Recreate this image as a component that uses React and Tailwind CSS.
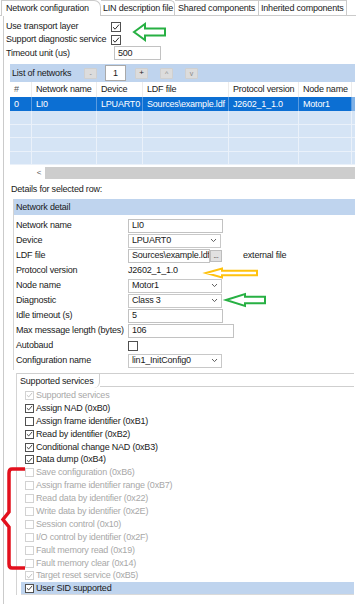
import React from 'react'

const NETWORKS = [{ id: '0', name: 'LI0', device: 'LPUART0', ldf: 'Sources\\example.ldf', proto: 'J2602_1_1.0', node: 'Motor1' }]

const COLS = [
  { key: 'id', label: '#', w: 'w-[22px]' },
  { key: 'name', label: 'Network name', w: 'w-[65px]' },
  { key: 'device', label: 'Device', w: 'w-[46px]' },
  { key: 'ldf', label: 'LDF file', w: 'w-[86px]' },
  { key: 'proto', label: 'Protocol version', w: 'w-[70px]' },
  { key: 'node', label: 'Node name', w: 'w-[53px]' },
]

const SERVICES = [
  { label: 'Supported services', on: true, dis: true },
  { label: 'Assign NAD (0xB0)', on: true },
  { label: 'Assign frame identifier (0xB1)', on: false },
  { label: 'Read by identifier (0xB2)', on: true },
  { label: 'Conditional change NAD (0xB3)', on: true },
  { label: 'Data dump (0xB4)', on: true },
  { label: 'Save configuration (0xB6)', dis: true },
  { label: 'Assign frame identifier range (0xB7)', dis: true },
  { label: 'Read data by identifier (0x22)', dis: true },
  { label: 'Write data by identifier (0x2E)', dis: true },
  { label: 'Session control (0x10)', dis: true },
  { label: 'I/O control by identifier (0x2F)', dis: true },
  { label: 'Fault memory read (0x19)', dis: true },
  { label: 'Fault memory clear (0x14)', dis: true },
  { label: 'Target reset service (0xB5)', on: true, dis: true },
]

function Check({ on, dis, size = 'w-[10px] h-[10px]' }) {
  return (
    <span className={`${size} shrink-0 inline-flex items-center justify-center bg-white border ${dis ? 'border-[#d2d2d2]' : 'border-[#505050]'}`}>
      {on && (
        <svg width="8" height="8" viewBox="0 0 8 8">
          <path d="M1 4.2 L3.1 6.2 L7 1.6" fill="none" stroke={dis ? '#b8b8b8' : '#2a2a2a'} strokeWidth="1" />
        </svg>
      )}
    </span>
  )
}

function Chevron() {
  return (
    <svg width="7" height="5" viewBox="0 0 7 5">
      <path d="M1 1 L3.5 3.6 L6 1" fill="none" stroke="#606060" strokeWidth="1" />
    </svg>
  )
}

function Input({ w, value }) {
  return (
    <div className={`${w} h-[14px] shrink-0 border border-[#c2c2c2] bg-white flex items-center pl-[3px] overflow-hidden`}>
      {value}
    </div>
  )
}

function Select({ w, value }) {
  return (
    <div className={`${w} h-[14px] shrink-0 border border-[#c8c8c8] bg-white flex items-center justify-between pl-[3px] pr-[3px]`}>
      <span>{value}</span>
      <Chevron />
    </div>
  )
}

function SmallBtn({ children }) {
  return (
    <div className="w-[13px] h-[11px] shrink-0 bg-[#dcdcdc] border border-[#d0d0d0] rounded-[1px] flex items-center justify-center text-[7px] text-[#8a8a8a]">
      {children}
    </div>
  )
}

function Arrow({ tip, cy, hw, hh, bh, end, color }) {
  const pts = [
    [tip, cy], [tip + hw, cy - hh], [tip + hw, cy - bh], [end, cy - bh],
    [end, cy + bh], [tip + hw, cy + bh], [tip + hw, cy + hh],
  ].map(p => p.join(',')).join(' ')
  return <polygon points={pts} fill="white" stroke={color} strokeWidth="2" strokeLinejoin="miter" />
}

function Row({ label, children }) {
  return (
    <div className="h-[15px] flex items-center">
      <div className="w-[114px] shrink-0 pl-[2px]">{label}</div>
      {children}
    </div>
  )
}

export default function App() {
  return (
    <div className="relative w-[356px] h-[604px] overflow-hidden bg-white text-[#1a1a1a] text-[9px] tracking-[-0.2px] leading-none whitespace-nowrap font-['Liberation_Sans',Arial,sans-serif]">
      {/* Tabs */}
      <div className="flex items-end h-[16px] border-b border-[#cbcbcb]">
        <div className="w-[100px] shrink-0 h-[16px] -mb-px bg-white border-t border-l border-r border-[#cbcbcb] rounded-tr-[7px] pl-[4px] ml-[1px] flex items-center">
          Network configuration
        </div>
        <div className="w-[74px] shrink-0 h-[15px] border-t border-r border-[#cbcbcb] rounded-tr-[5px] pl-[2px] flex items-center">
          LIN description file
        </div>
        <div className="w-[84px] shrink-0 h-[15px] border-t border-r border-[#cbcbcb] pl-[3px] flex items-center">
          Shared components
        </div>
        <div className="w-[88px] shrink-0 h-[15px] border-t border-r border-[#cbcbcb] pl-[2px] flex items-center">
          Inherited components
        </div>
      </div>

      {/* Page body */}
      <div className="ml-[3px] border-l border-[#cbcbcb] pl-[2px] h-[588px]">
        <div className="pt-[4px]">
          <div className="h-[13px] flex items-center">
            <div className="w-[105px] shrink-0">Use transport layer</div>
            <Check on />
          </div>
          <div className="h-[13px] flex items-center">
            <div className="w-[105px] shrink-0">Support diagnostic service</div>
            <Check on />
          </div>
          <div className="h-[14px] flex items-center">
            <div className="w-[108px] shrink-0">Timeout unit (us)</div>
            <Input w="w-[47px]" value="500" />
          </div>
        </div>

        {/* List of networks */}
        <div className="ml-[4px] mr-[1px] mt-[4px]">
          <div className="h-[18px] bg-[#bfd4ee] flex items-center pl-[2px]">
            <div className="w-[72px] shrink-0">List of networks</div>
            <SmallBtn>-</SmallBtn>
            <div className="ml-[8px] w-[21px] h-[16px] bg-white border border-[#a9a9a9] flex items-center justify-center">1</div>
            <div className="ml-[9px]"><SmallBtn><span className="text-[#222] text-[8px]">+</span></SmallBtn></div>
            <div className="ml-[12px]"><SmallBtn>^</SmallBtn></div>
            <div className="ml-[12px]"><SmallBtn>v</SmallBtn></div>
          </div>

          <div className="flex h-[15px] bg-white">
            {COLS.map(c => (
              <div key={c.key} className={`${c.w} shrink-0 border-r border-[#ececec] pl-[4px] flex items-center overflow-hidden ${c.key === 'id' ? 'text-[#555]' : ''}`}>
                {c.label}
              </div>
            ))}
            <div className="flex-1" />
          </div>

          {NETWORKS.map(n => (
            <div key={n.id} className="flex h-[14px] bg-[#0c6fd3] text-white">
              {COLS.map(c => (
                <div key={c.key} className={`${c.w} shrink-0 border-r border-[#5a9be0] pl-[4px] flex items-center overflow-hidden`}>
                  {n[c.key]}
                </div>
              ))}
              <div className="flex-1 bg-[#7fb1e6]" />
            </div>
          ))}
          {[0, 1, 2, 3].map(i => (
            <div key={i} className="flex h-[13.5px] bg-[#d5e4f5] border-b border-[#eaf1fa]">
              {COLS.map(c => (
                <div key={c.key} className={`${c.w} shrink-0 border-r border-[#eaf1fa]`} />
              ))}
              <div className="flex-1" />
            </div>
          ))}

          <div className="h-[15px] flex items-center">
            <div className="w-[23px] shrink-0" />
            <div className="w-[12px] h-[12px] flex items-center justify-center text-[#555] text-[8px]">&lt;</div>
            <div className="flex-1 h-[12px] bg-[#cdcdcd]" />
          </div>
        </div>

        <div className="h-[19px] flex items-center pl-[5px]">Details for selected row:</div>

        {/* Network detail */}
        <div className="ml-[7px] mr-[1px] border-l border-[#d4d4d4] pb-[2px]">
          <div className="h-[16px] bg-[#bfd4ee] flex items-center pl-[2px]">Network detail</div>
          <div className="pt-[3px]">
            <Row label="Network name"><Input w="w-[95px]" value="LI0" /></Row>
            <Row label="Device"><Select w="w-[93px]" value="LPUART0" /></Row>
            <Row label="LDF file">
              <Input w="w-[82px]" value="Sources\example.ldf" />
              <div className="w-[12px] h-[12px] shrink-0 bg-[#e1e1e1] border border-[#bdbdbd] flex items-end justify-center pb-[2px] text-[7px]">...</div>
              <div className="ml-[21px]">external file</div>
            </Row>
            <Row label="Protocol version"><span>J2602_1_1.0</span></Row>
            <Row label="Node name"><Select w="w-[94px]" value="Motor1" /></Row>
            <Row label="Diagnostic"><Select w="w-[94px]" value="Class 3" /></Row>
            <Row label="Idle timeout (s)"><Input w="w-[95px]" value="5" /></Row>
            <Row label="Max message length (bytes)"><Input w="w-[106px]" value="106" /></Row>
            <Row label="Autobaud"><Check /></Row>
            <Row label="Configuration name"><Select w="w-[94px]" value="lin1_InitConfig0" /></Row>
          </div>
        </div>

        {/* Supported services */}
        <div className="ml-[10px] mr-[2px] mt-[3px] border-l border-[#d4d4d4]">
          <div className="h-[14px] flex border-t border-[#cfcfcf]">
            <div className="w-[83px] shrink-0 h-[14px] bg-white border-r border-[#cfcfcf] rounded-br-[6px] pl-[3px] flex items-center">
              Supported services
            </div>
            <div className="flex-1 border-b border-[#cfcfcf]" />
          </div>
          <div className="pt-[2px]">
            {SERVICES.map(s => (
              <div key={s.label} className={`h-[12.9px] flex items-center gap-[2px] pl-[8px] ${s.dis ? 'text-[#a8a8a8]' : ''}`}>
                <Check on={s.on} dis={s.dis} size="w-[9px] h-[9px]" />
                <span>{s.label}</span>
              </div>
            ))}
            <div className="h-[13px] ml-[4px] bg-[#bfd4ee] flex items-center gap-[2px] pl-[4px] border-b border-[#dadada]">
              <Check on size="w-[9px] h-[9px]" />
              <span>User SID supported</span>
            </div>
          </div>
        </div>
      </div>

      {/* Annotations drawn over the screenshot */}
      <svg className="absolute left-0 top-0 pointer-events-none" width="356" height="604" viewBox="0 0 356 604">
        <Arrow tip={134} cy={32} hw={11} hh={8} bh={3.5} end={165} color="#27b043" />
        <Arrow tip={206} cy={273} hw={16} hh={4.5} bh={2.2} end={257} color="#ffc20e" />
        <Arrow tip={226} cy={300} hw={19} hh={6} bh={3.2} end={265} color="#27b043" />
        <path d="M25 469 H12 Q9 469 9 473 V512 L3 519.5 L9 527 V564 Q9 568 12 568 H25" fill="none" stroke="#e3101d" strokeWidth="3.5" />
      </svg>
    </div>
  )
}
